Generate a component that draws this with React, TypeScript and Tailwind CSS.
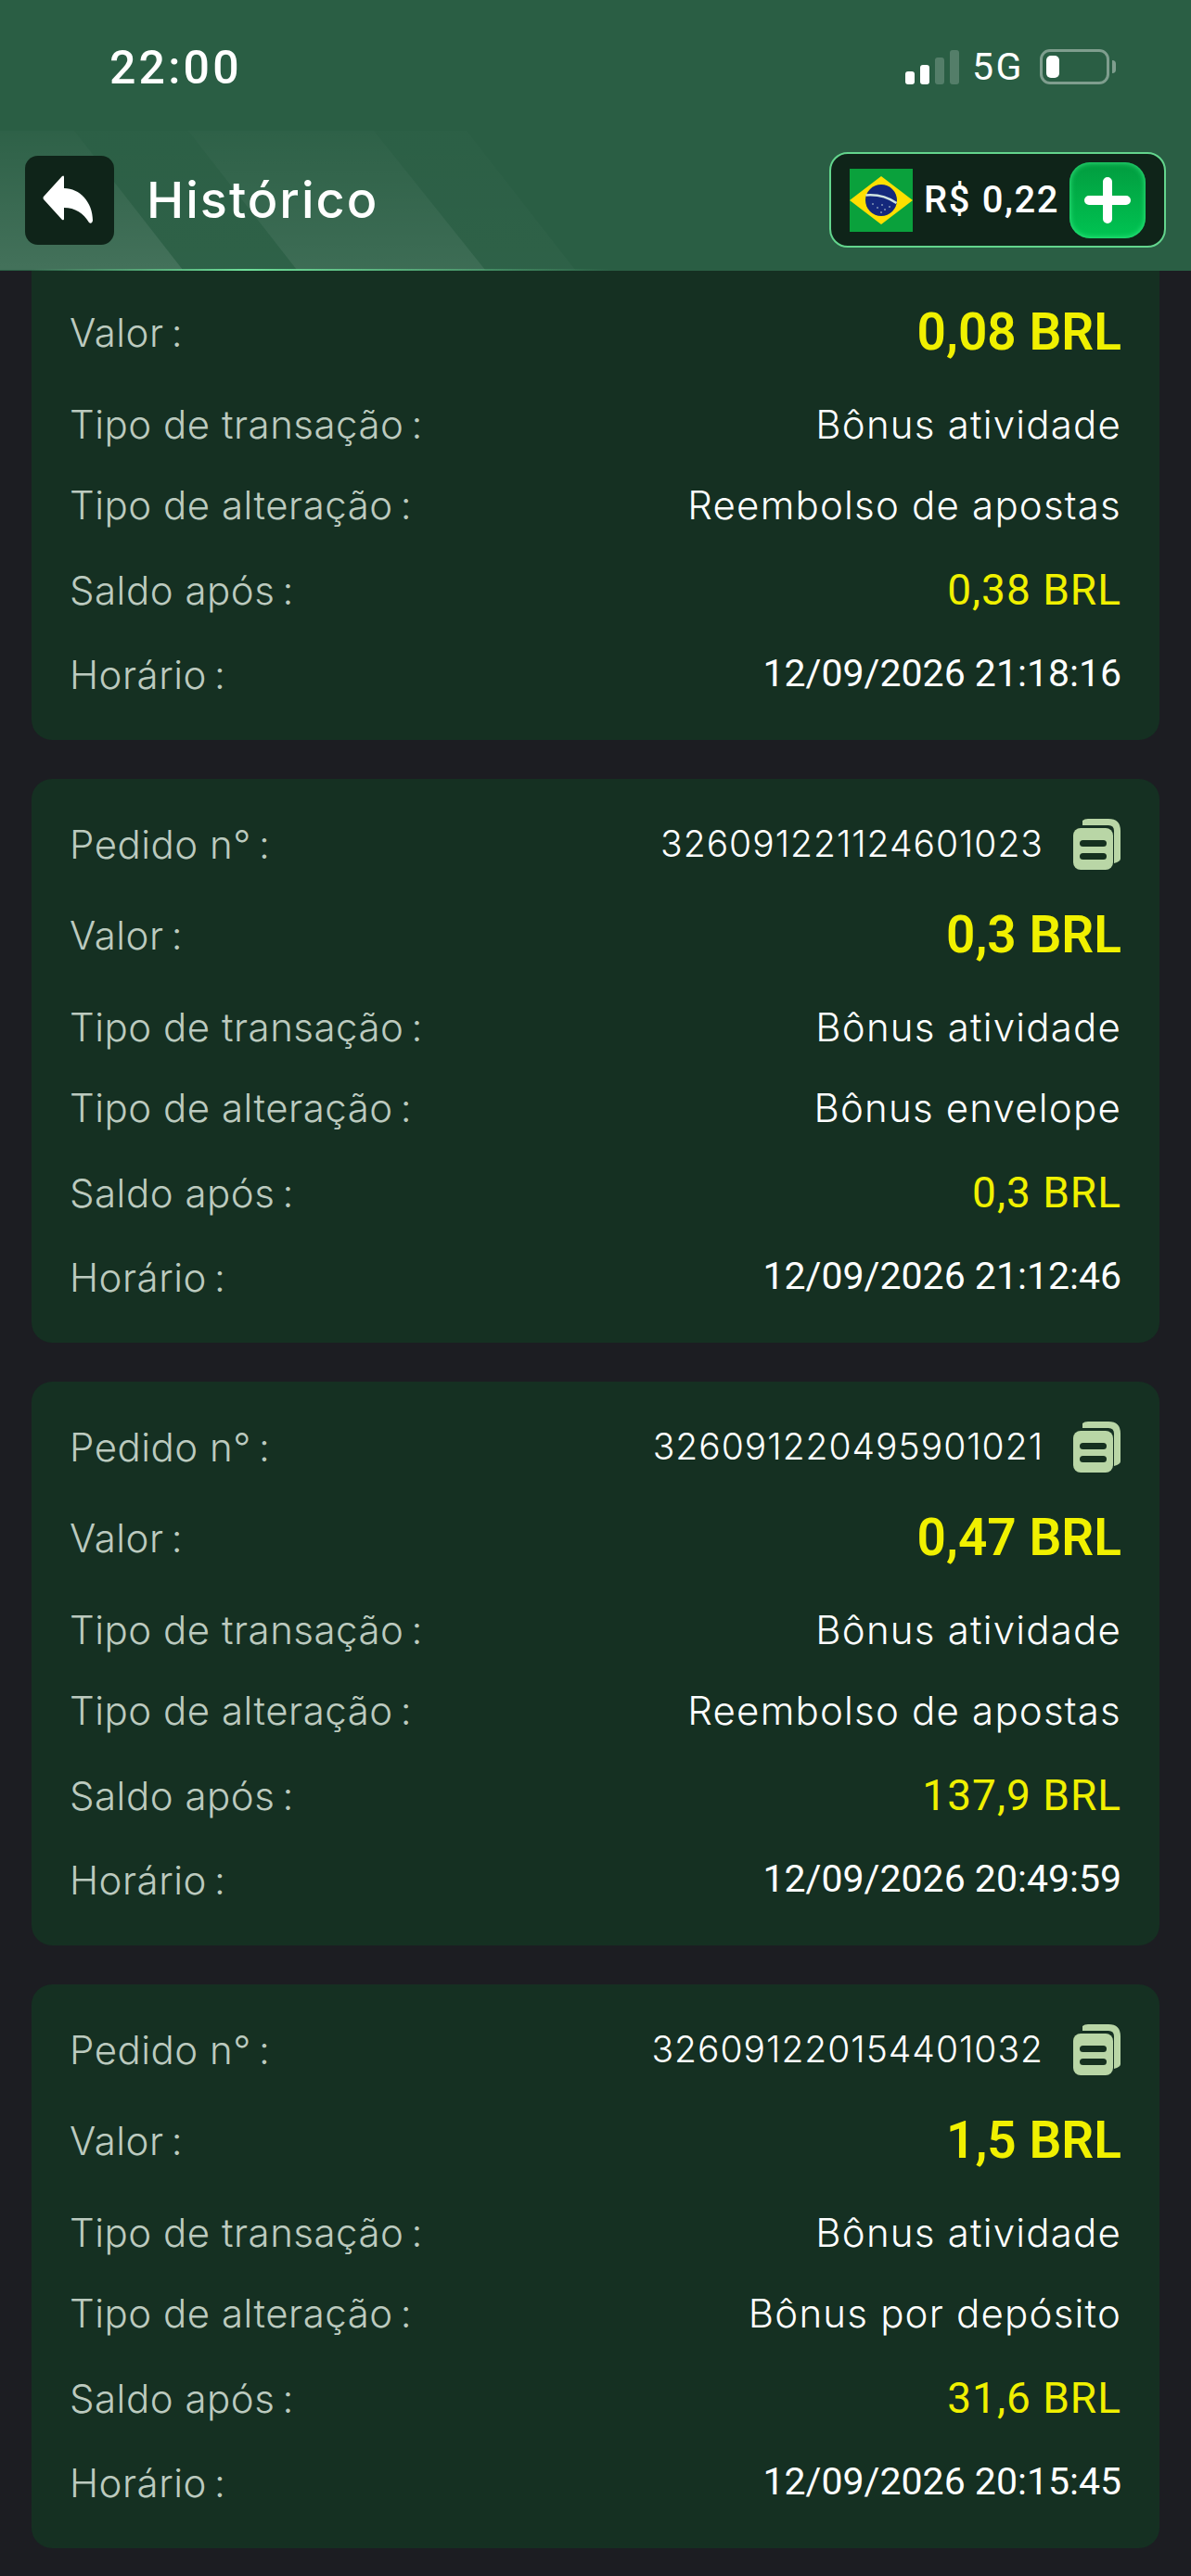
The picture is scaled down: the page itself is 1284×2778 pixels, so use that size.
const labelFont = "font-['Inter','Noto_Sans',sans-serif]"

type Tx = {
  order?: string
  value: string
  type: string
  change: string
  balance: string
  time: string
}

// o primeiro cartão está rolado por baixo do cabeçalho, sem o nº do pedido visível
const items: Tx[] = [
  { value: '0,08 BRL', type: 'Bônus atividade', change: 'Reembolso de apostas', balance: '0,38 BRL', time: '12/09/2026 21:18:16' },
  { order: '326091221124601023', value: '0,3 BRL', type: 'Bônus atividade', change: 'Bônus envelope', balance: '0,3 BRL', time: '12/09/2026 21:12:46' },
  { order: '326091220495901021', value: '0,47 BRL', type: 'Bônus atividade', change: 'Reembolso de apostas', balance: '137,9 BRL', time: '12/09/2026 20:49:59' },
  { order: '326091220154401032', value: '1,5 BRL', type: 'Bônus atividade', change: 'Bônus por depósito', balance: '31,6 BRL', time: '12/09/2026 20:15:45' },
]

function CopyIcon() {
  return (
    <svg width="52" height="56" viewBox="0 0 52 56" className="shrink-0">
      <path d="M10 3 Q12 1 16 1 H38 Q51 1 51 14 V44 Q51 47 44 49 V14 Q44 8 38 8 H10 Z" fill="#b9d6a6" />
      <rect x="0" y="11" width="43" height="45" rx="8" fill="#b9d6a6" />
      <rect x="7" y="24" width="29" height="7" rx="3.5" fill="#15301f" />
      <rect x="7" y="38" width="29" height="7" rx="3.5" fill="#15301f" />
    </svg>
  )
}

function BackIcon() {
  return (
    <svg width="54" height="52" viewBox="0 0 54 52" className="translate-x-[-2px] translate-y-[-1px]">
      <path d="M21 1 L1 23 Q0 24.500 1 26 L21 48 Q23 49 23 47 V35 C35 35 44 41 50 51 Q53 53 54 49 C54 29 40 14 23 14 V2 Q23 -0.500 21 1 Z" fill="#fff" />
    </svg>
  )
}

function BrazilFlag() {
  return (
    <svg width="68" height="68" viewBox="0 0 68 68" className="shrink-0">
      <rect width="68" height="68" fill="#0aa13c" />
      <polygon points="34,8 68,34 34,60 0,34" fill="#ffdf00" />
      <circle cx="34" cy="34" r="17" fill="#14287c" />
      <path d="M17.500 28.500 Q36 27 50.500 37" stroke="#cfe3e0" strokeWidth="2.500" fill="none" />
      <circle cx="25" cy="38" r="0.8" fill="#cfe3e0" />
      <circle cx="30" cy="42" r="0.8" fill="#cfe3e0" />
      <circle cx="35" cy="39" r="0.8" fill="#cfe3e0" />
      <circle cx="38" cy="44" r="0.8" fill="#cfe3e0" />
      <circle cx="43" cy="41" r="0.8" fill="#cfe3e0" />
      <circle cx="34" cy="47" r="0.8" fill="#cfe3e0" />
    </svg>
  )
}

function StatusBar() {
  return (
    <div className="h-[140px] flex justify-between pl-[118px] pr-[81px] pt-[44px] text-white font-['Roboto',sans-serif]">
      <span className="text-[50px] leading-[58px] font-medium tracking-[3.2px]">22:00</span>
      <div className="flex items-start pt-[9px]">
        <div className="flex items-end gap-[6px] h-[38px]">
          <span className="w-[10px] h-[14px] rounded-[3px] bg-white" />
          <span className="w-[10px] h-[21px] rounded-[3px] bg-white" />
          <span className="w-[10px] h-[29px] rounded-[3px] bg-white/20" />
          <span className="w-[10px] h-[37px] rounded-[3px] bg-white/20" />
        </div>
        <span className="ml-[14px] text-[41px] leading-[42px] tracking-[2.5px] -mt-[2px]">5G</span>
        <div className="ml-[17px] w-[75px] h-[38px] rounded-[11px] border-[3px] border-white/40 p-[4px]">
          <div className="w-[14px] h-full rounded-[5px] bg-white" />
        </div>
        <span className="w-[4px] h-[14px] mt-[12px] ml-[3px] rounded-r-[4px] bg-white/40" />
      </div>
    </div>
  )
}

function Header() {
  return (
    <header className="relative z-10 h-[292px] bg-[#2a5e44] shrink-0">
      <StatusBar />
      {/* faixas diagonais de fundo */}
      <svg className="absolute left-0 top-[141px] pointer-events-none" width="640" height="150" viewBox="0 0 640 150">
        <defs>
          <linearGradient id="stripe" x1="0" y1="0" x2="0" y2="1">
            <stop offset="0" stopColor="#fff" stopOpacity="0.02" />
            <stop offset="1" stopColor="#fff" stopOpacity="0.12" />
          </linearGradient>
          <linearGradient id="stripeMid" x1="0" y1="0" x2="0" y2="1">
            <stop offset="0" stopColor="#fff" stopOpacity="0.02" />
            <stop offset="1" stopColor="#fff" stopOpacity="0.09" />
          </linearGradient>
          <linearGradient id="stripeSoft" x1="0" y1="0" x2="0" y2="1">
            <stop offset="0" stopColor="#fff" stopOpacity="0.01" />
            <stop offset="1" stopColor="#fff" stopOpacity="0.02" />
          </linearGradient>
        </defs>
        <polygon points="0,0 80,0 197,150 0,150" fill="url(#stripe)" />
        <polygon points="80,0 203,0 320,150 197,150" fill="url(#stripeSoft)" />
        <polygon points="203,0 305,0 422,150 320,150" fill="url(#stripeMid)" />
        <polygon points="305,0 403,0 523,150 422,150" fill="url(#stripeMid)" />
        <polygon points="403,0 503,0 620,150 523,150" fill="url(#stripeSoft)" />
      </svg>
      <div className="relative flex items-center justify-between px-[27px] pt-[24px]">
        <div className="flex items-center">
          <button className="w-[96px] h-[96px] rounded-[14px] bg-[#0f2419] flex items-center justify-center">
            <BackIcon />
          </button>
          <h1 className={`ml-[35px] text-white text-[54px] leading-[64px] font-medium tracking-[2px] ${labelFont}`}>Histórico</h1>
        </div>
        <div className="w-[363px] h-[103px] rounded-[20px] border-2 border-[#63d58d] bg-[#0f2419] flex items-center px-[20px]">
          <BrazilFlag />
          <span className="ml-[12px] text-white text-[40px] font-medium tracking-[1.6px] font-['Roboto',sans-serif] whitespace-nowrap">R$ 0,22</span>
          <button className="ml-auto w-[82px] h-[82px] rounded-[22px] bg-gradient-to-b from-[#029c3f] to-[#00c452] shadow-[inset_0_0_6px_#3bf08a] flex items-center justify-center">
            <svg width="50" height="50" viewBox="0 0 50 50">
              <path d="M25 5 V45 M5 25 H45" stroke="#fff" strokeWidth="10" strokeLinecap="round" />
            </svg>
          </button>
        </div>
      </div>
      <div className="absolute left-0 bottom-0 w-[660px] h-[2px] bg-gradient-to-r from-transparent from-[5%] via-[#6fe09a] via-[40%] to-transparent" />
    </header>
  )
}

function Row({ label, className, children }: { label: string; className: string; children: React.ReactNode }) {
  return (
    <div className={`h-[60px] flex items-center justify-between ${className}`}>
      <span className={`text-[42px] font-light tracking-[0.5px] text-[#bccabf] whitespace-nowrap ${labelFont}`}>{label}{'\u2009'}:</span>
      {children}
    </div>
  )
}

function Card({ tx }: { tx: Tx }) {
  const plain = `text-[42px] font-light tracking-[1.2px] text-white whitespace-nowrap ${labelFont}`
  return (
    <div className="h-[608px] shrink-0 rounded-[22px] bg-[#153022] px-[41px] pt-[40px]">
      {tx.order ? (
        <Row label="Pedido n°" className="">
          <div className="flex items-center gap-[32px]">
            <span className={`text-[39px] font-light tracking-[1px] text-white whitespace-nowrap ${labelFont}`}>{tx.order}</span>
            <CopyIcon />
          </div>
        </Row>
      ) : (
        <div className="h-[60px]" />
      )}
      <Row label="Valor" className="mt-[38px]">
        <span className="text-[55px] font-semibold text-[#f0f000] font-['Roboto',sans-serif]">{tx.value}</span>
      </Row>
      <Row label="Tipo de transação" className="mt-[39px]">
        <span className={plain}>{tx.type}</span>
      </Row>
      <Row label="Tipo de alteração" className="mt-[27px]">
        <span className={plain}>{tx.change}</span>
      </Row>
      <Row label="Saldo após" className="mt-[32px]">
        <span className="text-[46px] tracking-[1px] text-[#f0f000] font-['Roboto',sans-serif]">{tx.balance}</span>
      </Row>
      <Row label="Horário" className="mt-[31px]">
        <span className="text-[41px] text-white font-['Roboto',sans-serif]">{tx.time}</span>
      </Row>
    </div>
  )
}

export default function App() {
  return (
    <div className="w-[1284px] h-[2778px] flex flex-col overflow-hidden bg-[#1c1d22]">
      <Header />
      <main className="flex-1 overflow-hidden px-[34px]">
        <div className="flex flex-col gap-[42px] -mt-[102px]">
          {items.map((tx) => (
            <Card key={tx.time} tx={tx} />
          ))}
        </div>
      </main>
    </div>
  )
}
